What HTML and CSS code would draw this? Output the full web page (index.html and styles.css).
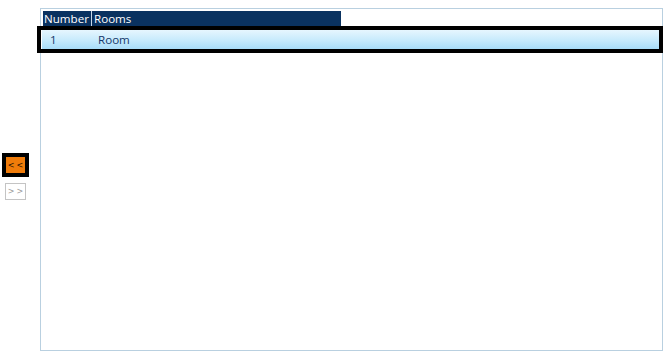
FILE: index.html
```html
<!DOCTYPE html>
<html>
<head>
<meta charset="utf-8">
<link rel="stylesheet" href="styles.css">
</head>
<body>
<div class="page">
  <div class="side">
    <div class="btn-focus"><button class="btn btn-active">&lt;&lt;</button></div>
    <button class="btn btn-plain">&gt;&gt;</button>
  </div>
  <div class="panel">
    <div class="header">
      <div class="hcell hnum">Number</div>
      <div class="hcell hrooms">Rooms</div>
    </div>
    <div class="row-focus">
      <div class="row">
        <div class="cell cnum">1</div>
        <div class="cell croom">Room</div>
      </div>
    </div>
  </div>
</div>
</body>
</html>
```
FILE: styles.css
```css
html, body {
  margin: 0;
  padding: 0;
  background: #ffffff;
}
.page {
  display: flex;
  font-family: "Open Sans", "Noto Sans", sans-serif;
  font-size: 11.6px;
}
.side {
  width: 40px;
  display: flex;
  flex-direction: column;
  align-items: flex-start;
  padding-top: 153px;
}
.btn {
  font-family: "DejaVu Sans", sans-serif;
  font-size: 8px;
  letter-spacing: 2px;
  text-indent: 2px;
  padding: 0;
  margin: 0;
  display: flex;
  align-items: center;
  justify-content: center;
}
.btn-focus {
  margin-left: 2px;
  border: 4px solid #000000;
  width: 19px;
  height: 16px;
}
.btn-active {
  width: 19px;
  height: 16px;
  background: #f07c0a;
  border: none;
  color: #2a1200;
}
.btn-plain {
  margin-top: 6px;
  margin-left: 5px;
  width: 21px;
  height: 17px;
  background: #ffffff;
  border: 1px solid #c4c4c4;
  color: #9a9a9a;
}
.panel {
  margin-top: 8px;
  width: 619px;
  height: 339px;
  border: 1px solid #b9d0e0;
  padding: 2px 0 0 2px;
  box-sizing: content-box;
}
.header {
  display: flex;
  width: 298px;
  height: 15px;
  background: #0a3260;
  color: #ffffff;
  line-height: 15px;
}
.hcell {
  padding-left: 2px;
}
.hnum {
  width: 49px;
  border-right: 1px solid #c8d8e8;
  box-sizing: border-box;
  padding-left: 1px;
}
.row-focus {
  margin-left: -6px;
  margin-right: -1px;
  border: 4px solid #000000;
  height: 19px;
}
.row {
  display: flex;
  height: 19px;
  line-height: 19px;
  color: #16386a;
  background: linear-gradient(#e6f6fe, #c6eafc 55%, #a8dcf8);
  margin-left: 1px;
}
.cnum {
  width: 56px;
  padding-left: 8px;
  box-sizing: border-box;
}
```
